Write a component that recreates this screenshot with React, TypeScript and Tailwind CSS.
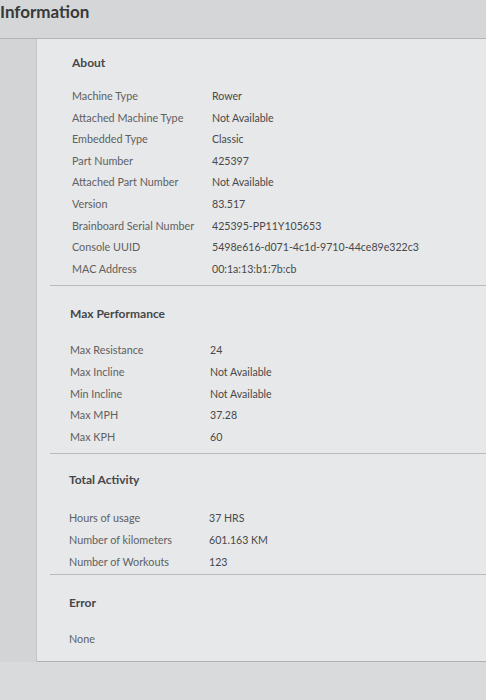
const ABOUT = [
  ['Machine Type', 'Rower'],
  ['Attached Machine Type', 'Not Available'],
  ['Embedded Type', 'Classic'],
  ['Part Number', '425397'],
  ['Attached Part Number', 'Not Available'],
  ['Version', '83.517'],
  ['Brainboard Serial Number', '425395-PP11Y105653'],
  ['Console UUID', '5498e616-d071-4c1d-9710-44ce89e322c3'],
  ['MAC Address', '00:1a:13:b1:7b:cb'],
];

const PERFORMANCE = [
  ['Max Resistance', '24'],
  ['Max Incline', 'Not Available'],
  ['Min Incline', 'Not Available'],
  ['Max MPH', '37.28'],
  ['Max KPH', '60'],
];

const ACTIVITY = [
  ['Hours of usage', '37 HRS'],
  ['Number of kilometers', '601.163 KM'],
  ['Number of Workouts', '123'],
];

function Rows({ rows }: { rows: string[][] }) {
  return (
    <div className="flex flex-col">
      {rows.map(([label, value]) => (
        <div key={label} className="flex items-baseline h-[21.6px] leading-[21.6px]">
          <span className="w-[140px] shrink-0 text-[10.8px] text-[#5e6062]">{label}</span>
          <span className="text-[10.6px] text-[#47494b]">{value}</span>
        </div>
      ))}
    </div>
  );
}

function Divider() {
  return <div className="ml-[13px] h-px bg-[#b9bbbd]" />;
}

export default function App() {
  return (
    <div
      className="w-[486px] h-[700px] overflow-hidden bg-[#d9dadb] flex flex-col"
      style={{ fontFamily: 'Lato, "Open Sans", sans-serif' }}
    >
      <header className="h-[39px] shrink-0 border-b border-[#b3b5b6] bg-[#d5d6d7] pt-[1px]">
        <h1 className="text-[17px] font-bold leading-[22px] text-[#37393b]">Information</h1>
      </header>

      <div className="flex h-[623px] shrink-0">
        <aside className="w-[37px] shrink-0 bg-[#d3d4d5] border-r border-[#c3c5c6]" />

        <main className="flex-1 bg-[#e7e8e9] border-b border-[#aeb0b2] flex flex-col">
          <section className="pl-[35px] pt-[16px] pb-[6px]">
            <h2 className="text-[12px] font-bold leading-[16px] text-[#45474a]">About</h2>
            <div className="mt-[14px]">
              <Rows rows={ABOUT} />
            </div>
          </section>
          <Divider />

          <section className="pl-[33px] pt-[20px] pb-[6px]">
            <h2 className="text-[12px] font-bold leading-[16px] text-[#45474a]">Max Performance</h2>
            <div className="mt-[17px]">
              <Rows rows={PERFORMANCE} />
            </div>
          </section>
          <Divider />

          <section className="pl-[32px] pt-[18px] pb-[2px]">
            <h2 className="text-[12px] font-bold leading-[16px] text-[#45474a]">Total Activity</h2>
            <div className="mt-[19px]">
              <Rows rows={ACTIVITY} />
            </div>
          </section>
          <Divider />

          <section className="pl-[32px] pt-[20px]">
            <h2 className="text-[12px] font-bold leading-[16px] text-[#45474a]">Error</h2>
            <div className="mt-[17px] h-[21.6px] leading-[21.6px] text-[10.8px] text-[#5e6062]">None</div>
          </section>
        </main>
      </div>
    </div>
  );
}
